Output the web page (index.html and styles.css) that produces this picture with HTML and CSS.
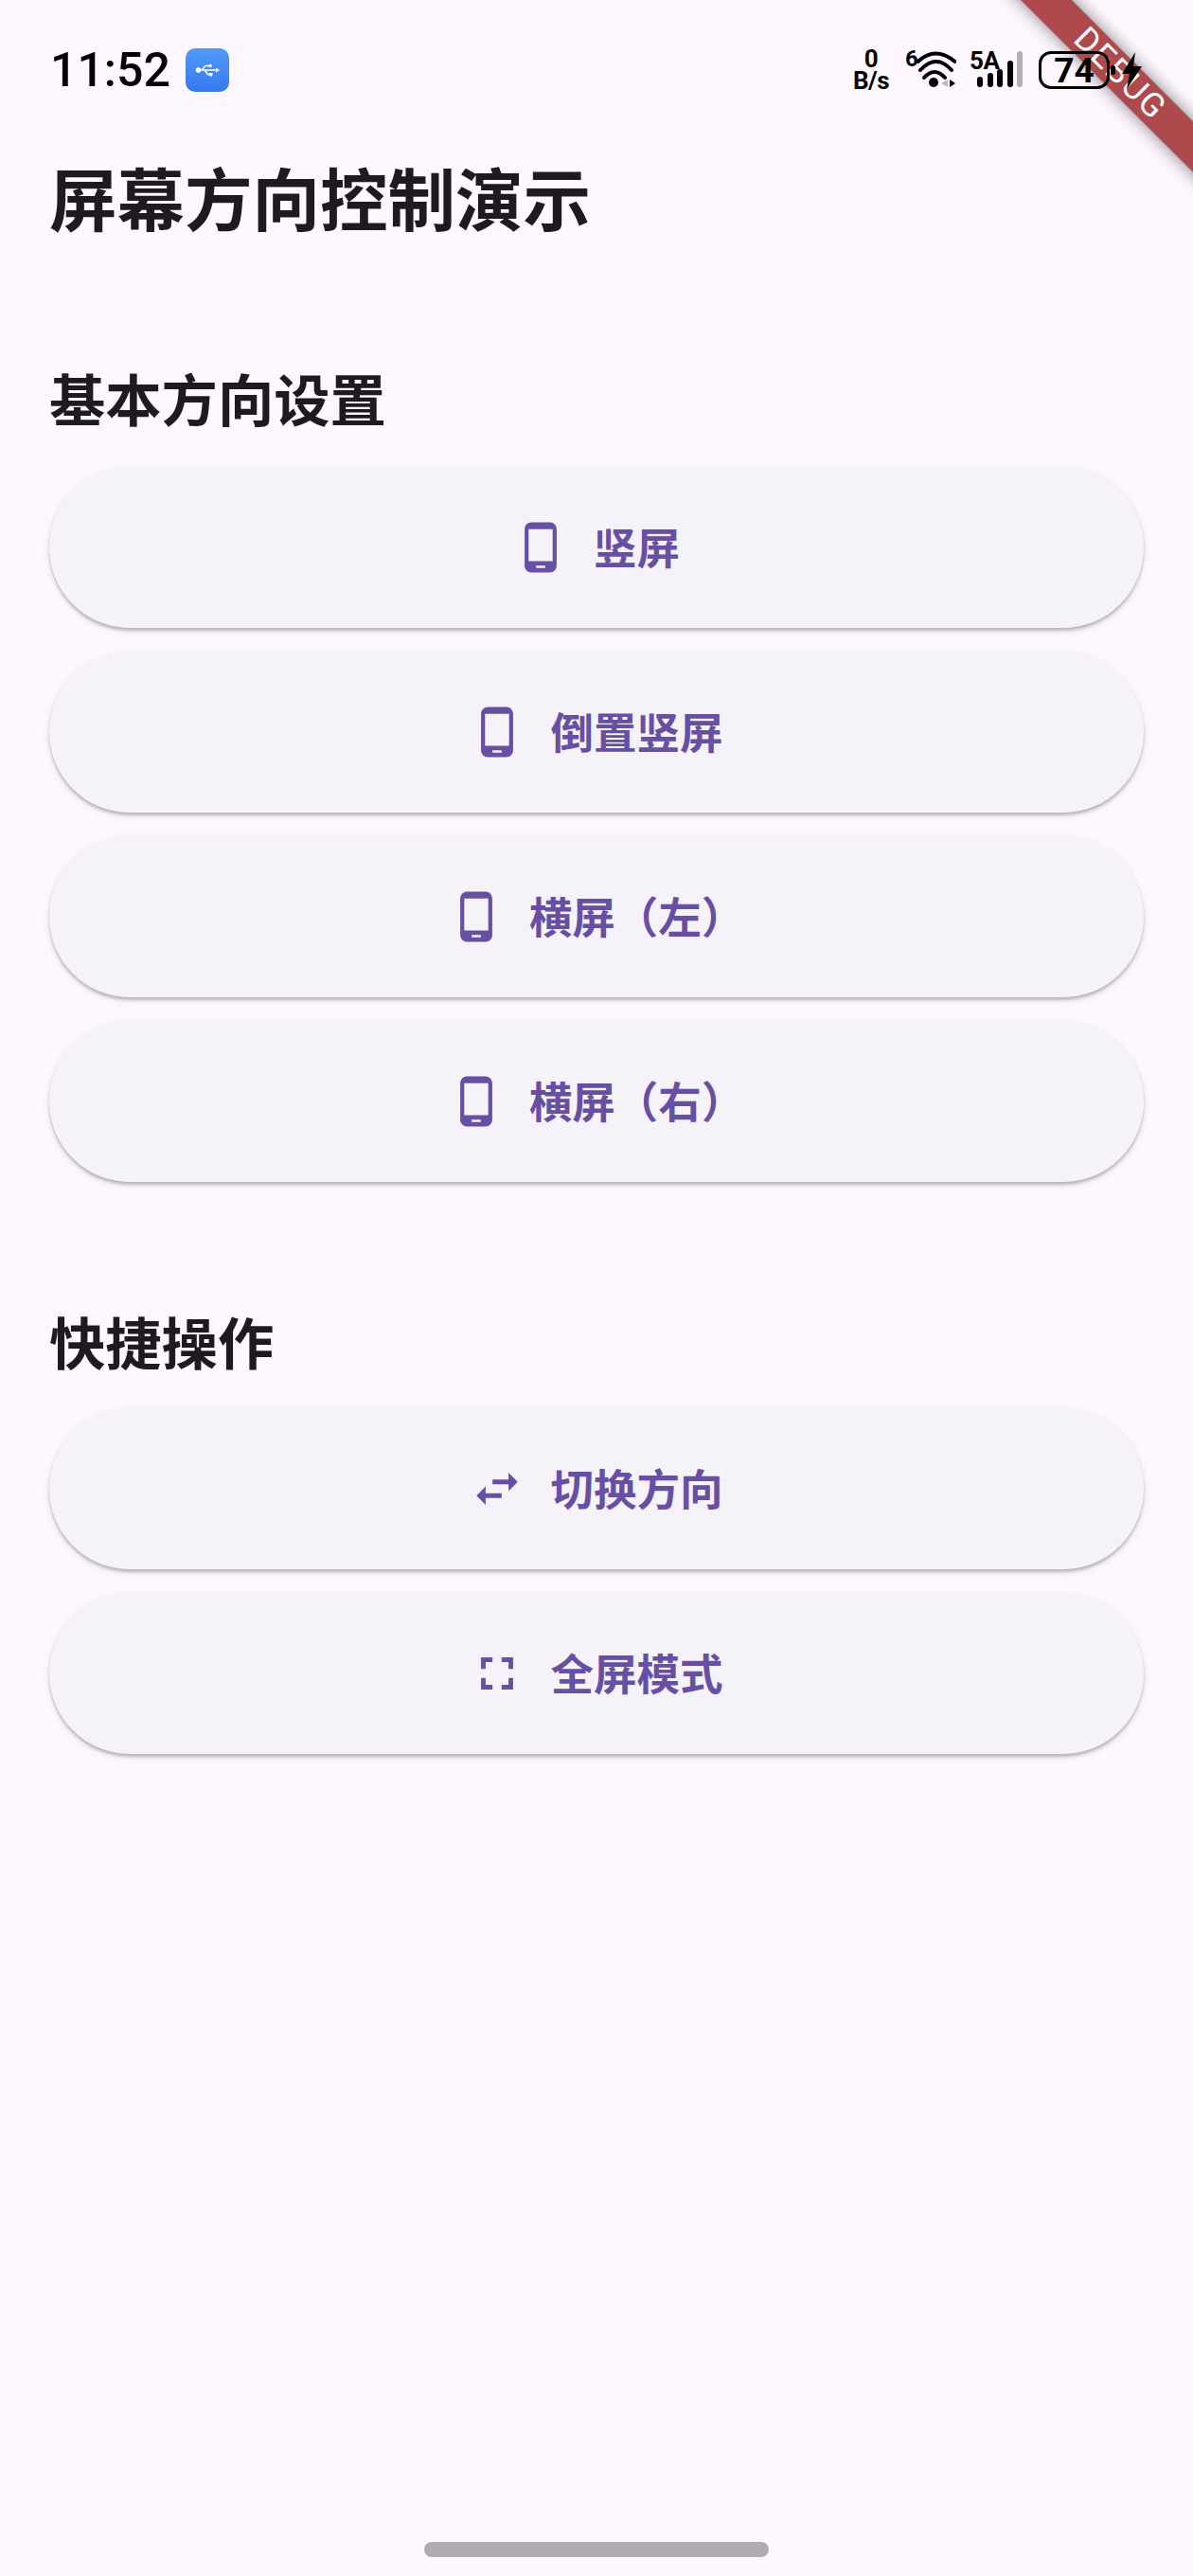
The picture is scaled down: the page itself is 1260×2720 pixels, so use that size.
FILE: index.html
```html
<!DOCTYPE html>
<html>
<head>
    <meta charset="utf-8">
    <title>屏幕方向控制演示</title>
    <link rel="stylesheet" href="styles.css">
</head>
<body>
    <div class="status-bar">
        <span class="clock">11:52</span>
        <span class="usb-badge">
            <svg width="26" height="16" viewBox="0 0 26 16">
                <path d="M3 8H23M7 8L11 3.500H15M10 8L13.500 12.500H16" fill="none" stroke="#fff" stroke-width="1.600"/>
                <circle cx="3.500" cy="8" r="2.800" fill="#fff"/>
                <path d="M26 8L22 5.500V10.500Z" fill="#fff"/>
                <circle cx="16" cy="3.500" r="1.800" fill="#fff"/>
                <rect x="15" y="11" width="3.400" height="3.400" fill="#fff"/>
            </svg>
        </span>
        <span class="spacer"></span>
        <span class="net-speed"><b>0</b><b>B/s</b></span>
        <span class="wifi">
            <span class="wifi-gen">6</span>
            <svg class="wifi-icon" width="42" height="40" viewBox="0 0 42 40">
                <path d="M1.500 12Q20-5 40.500 12M4 21Q21 3 37 21M8 29Q19 17 30 29" fill="none" stroke="#000" stroke-width="4" stroke-linecap="round"/>
                <circle cx="18" cy="34" r="5" fill="#000"/>
                <path d="M26 35L33 31V39Z" fill="#bdb8bf"/>
                <path d="M35 31L41 35L35 39Z" fill="#000"/>
            </svg>
        </span>
        <span class="cell">
            <span class="cell-gen">5A</span>
            <span class="bars">
                <i class="bar b1"></i><i class="bar b2"></i><i class="bar b3"></i><i class="bar b4"></i><i class="bar b5"></i>
            </span>
        </span>
        <span class="battery"><span class="battery-level">74</span></span>
        <span class="battery-nub"></span>
        <svg class="bolt" width="21" height="39" viewBox="0 0 21 39">
            <path d="M14 0L0 23H8L5 39L21 15H12Z" fill="#000"/>
        </svg>
    </div>

    <div class="page">
        <h1 class="page-title">屏幕方向控制演示</h1>

        <h2 class="section-title">基本方向设置</h2>
        <div class="button-list">
            <button class="action">
                <svg class="icon" viewBox="0 0 24 24"><path d="M16 1H8C6.340 1 5 2.340 5 4v16c0 1.660 1.340 3 3 3h8c1.660 0 3-1.340 3-3V4c0-1.660-1.340-3-3-3zm-2 20h-4v-1h4v1zm3.250-3H6.750V4h10.500v14z"/></svg>
                <span class="action-label">竖屏</span>
            </button>
            <button class="action">
                <svg class="icon" viewBox="0 0 24 24"><path d="M16 1H8C6.340 1 5 2.340 5 4v16c0 1.660 1.340 3 3 3h8c1.660 0 3-1.340 3-3V4c0-1.660-1.340-3-3-3zm-2 20h-4v-1h4v1zm3.250-3H6.750V4h10.500v14z"/></svg>
                <span class="action-label">倒置竖屏</span>
            </button>
            <button class="action">
                <svg class="icon" viewBox="0 0 24 24"><path d="M16 1H8C6.340 1 5 2.340 5 4v16c0 1.660 1.340 3 3 3h8c1.660 0 3-1.340 3-3V4c0-1.660-1.340-3-3-3zm-2 20h-4v-1h4v1zm3.250-3H6.750V4h10.500v14z"/></svg>
                <span class="action-label">横屏（左）</span>
            </button>
            <button class="action">
                <svg class="icon" viewBox="0 0 24 24"><path d="M16 1H8C6.340 1 5 2.340 5 4v16c0 1.660 1.340 3 3 3h8c1.660 0 3-1.340 3-3V4c0-1.660-1.340-3-3-3zm-2 20h-4v-1h4v1zm3.250-3H6.750V4h10.500v14z"/></svg>
                <span class="action-label">横屏（右）</span>
            </button>
        </div>

        <h2 class="section-title second">快捷操作</h2>
        <div class="button-list">
            <button class="action">
                <svg class="icon" viewBox="0 0 24 24"><path d="M6.990 11L3 15l3.990 4v-3H14v-2H6.990v-3zM21 9l-3.990-4v3H10v2h7.010v3L21 9z"/></svg>
                <span class="action-label">切换方向</span>
            </button>
            <button class="action">
                <svg class="icon" viewBox="0 0 24 24"><path d="M7 14H5v5h5v-2H7v-3zm-2-4h2V7h3V5H5v5zm12 7h-3v2h5v-5h-2v3zM14 5v2h3v3h2V5h-5z"/></svg>
                <span class="action-label">全屏模式</span>
            </button>
        </div>
    </div>

    <div class="home-indicator"></div>

    <div class="banner-clip">
        <div class="debug-banner">DEBUG</div>
    </div>
</body>
</html>
```

FILE: styles.css
```css
html, body {
    margin: 0;
    padding: 0;
}
body {
    position: relative;
    width: 1260px;
    height: 2720px;
    overflow: hidden;
    background-color: #fef7ff;
    color: #1d1b20;
    font-family: "Noto Sans CJK SC", "Noto Sans", sans-serif;
}

/* status bar, the system draws it above the ribbon */
.status-bar {
    position: relative;
    z-index: 2;
    display: flex;
    align-items: center;
    height: 148px;
    padding: 0 54px 0 53px;
    color: #000;
    font-family: Roboto, sans-serif;
}
.clock {
    font-size: 50px;
    font-weight: 500;
    line-height: 1;
}
.usb-badge {
    display: flex;
    align-items: center;
    justify-content: center;
    width: 46px;
    height: 46px;
    margin-left: 16px;
    border-radius: 10px;
    background: linear-gradient(#4f9bf7, #3877ef);
}
.spacer {
    flex: 1;
}
.net-speed {
    display: flex;
    flex-direction: column;
    align-items: center;
    width: 38px;
    font-size: 26px;
    letter-spacing: -.5px;
    line-height: 23px;
}
.wifi {
    display: flex;
    align-items: flex-start;
    height: 40px;
    margin-left: 17px;
}
.wifi-gen {
    width: 12px;
    margin-top: -2px;
    font-size: 24px;
    font-weight: 700;
    line-height: 20px;
}
.wifi-icon {
    margin-top: -1px;
}
.cell {
    position: relative;
    display: block;
    width: 58px;
    height: 40px;
    margin-left: 14px;
}
.cell-gen {
    position: absolute;
    left: 0;
    top: -1px;
    font-size: 26px;
    font-weight: 700;
    letter-spacing: -.5px;
    line-height: 22px;
}
.bars {
    position: absolute;
    left: 8px;
    bottom: 2px;
    display: flex;
    align-items: flex-end;
    gap: 4.500px;
}
.bar {
    display: block;
    width: 6px;
    border-radius: 3px;
    background-color: #000;
}
.b1 { height: 11px; }
.b2 { height: 15px; }
.b3 { height: 19px; }
.b4 { height: 28px; }
.b5 { height: 38px; background-color: #b3aeb5; }

.battery {
    display: flex;
    align-items: center;
    justify-content: center;
    box-sizing: border-box;
    width: 75px;
    height: 40px;
    margin-left: 15px;
    border: 3px solid #000;
    border-radius: 13px;
}
.battery-level {
    font-size: 37px;
    font-weight: 700;
    line-height: 1;
}
.battery-nub {
    width: 5px;
    height: 10px;
    margin-left: 1px;
    border-radius: 3px;
    background-color: #000;
}
.bolt {
    margin-left: 7px;
}

/* page content */
.page {
    padding: 0 52px;
}
.page-title {
    margin: 9px 0 0;
    font-size: 71.500px;
    font-weight: 700;
    line-height: 100px;
}
.section-title {
    margin: 122px 0 34px;
    font-size: 59.300px;
    font-weight: 700;
    line-height: 80px;
}
.section-title.second {
    margin-top: 127px;
    margin-bottom: 32px;
}
.button-list {
    display: flex;
    flex-direction: column;
    gap: 25px;
}
.action {
    display: flex;
    align-items: center;
    justify-content: center;
    gap: 27px;
    height: 170px;
    padding: 0;
    border: 0;
    border-radius: 85px;
    background-color: #f6f2f9;
    box-shadow: 0 3px 3px rgba(0, 0, 0, .2), 0 3px 9px rgba(0, 0, 0, .1);
    color: #6750a4;
    font-family: "Noto Sans CJK SC", "Noto Sans", sans-serif;
    font-size: 45.500px;
    font-weight: 700;
}
.action-label {
    padding-bottom: 5px;
}
.icon {
    width: 58px;
    height: 58px;
    fill: #6750a4;
}

.home-indicator {
    position: absolute;
    left: 448px;
    top: 2684px;
    width: 364px;
    height: 16px;
    border-radius: 8px;
    background-color: #b2abb3;
}

/* debug ribbon over the top right corner */
.banner-clip {
    position: absolute;
    right: 0;
    top: 0;
    width: 300px;
    height: 300px;
    overflow: hidden;
}
.debug-banner {
    position: absolute;
    left: 23px;
    top: 59px;
    width: 400px;
    height: 38px;
    background-color: rgba(140, 0, 0, .7);
    box-shadow: 0 0 17px rgba(0, 0, 0, .5);
    color: #fff;
    font-family: Roboto, sans-serif;
    font-size: 35px;
    line-height: 38px;
    letter-spacing: 2px;
    text-align: center;
    transform: rotate(45deg);
}
```
